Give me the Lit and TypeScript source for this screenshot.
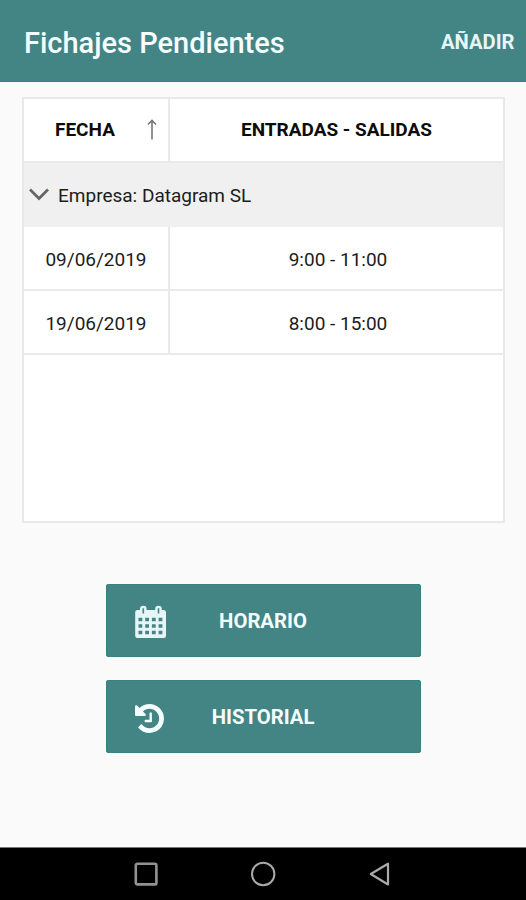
import { LitElement, html, css, svg } from "lit";
import { customElement, property } from "lit/decorators.js";

const calendarIcon = svg`<svg width="32" height="34" viewBox="0 0 32 34">
  <path fill="#e6f6f7" fill-rule="evenodd" d="M3 5H5V4a3.3 3.3 0 0 1 6.6 0V5H20.2V4a3.3 3.3 0 0 1 6.6 0V5H29A2.2 2.2 0 0 1 31 7.2V30.8A2.2 2.2 0 0 1 28.8 33H2.4A2.2 2.2 0 0 1 .2 30.8V7.2A2.2 2.2 0 0 1 2.4 5Z
  M7.5 3.2V8.4H9.1V3.2ZM22.7 3.2V8.4H24.3V3.2Z
  M3.5 12.7h3.8v3.5h-3.8zM10.2 12.7h3.8v3.5h-3.8zM16.9 12.7h3.8v3.5h-3.8zM23.6 12.7h3.8v3.5h-3.8z
  M3.5 19.2h3.8v3.5h-3.8zM10.2 19.2h3.8v3.5h-3.8zM16.9 19.2h3.8v3.5h-3.8zM23.6 19.2h3.8v3.5h-3.8z
  M3.5 25.7h3.8v3.5h-3.8zM10.2 25.7h3.8v3.5h-3.8zM16.9 25.7h3.8v3.5h-3.8zM23.6 25.7h3.8v3.5h-3.8z"/>
</svg>`;

const historyIcon = svg`<svg width="29" height="29" viewBox="0 128 1536 1536">
  <path fill="#f4fdfd" d="M1536 896q0 156-61 298t-164 245-245 164-298 61q-172 0-327-72.5t-264-204.5q-7-10-6.5-22.5t8.5-20.5l137-138q10-9 25-9 16 2 23 12 73 95 179 147t225 52q104 0 198.5-40.5t163.5-109.5 109.5-163.5 40.5-198.5-40.5-198.5-109.5-163.5-163.5-109.5-198.5-40.5q-98 0-188 35.5t-160 101.5l137 138q31 30 14 69-17 40-59 40h-448q-26 0-45-19t-19-45v-448q0-42 40-59 39-17 69 14l130 129q107-101 244.5-156.5t284.5-55.5q156 0 298 61t245 164 164 245 61 298zm-640-288v448q0 14-9 23t-23 9h-320q-14 0-23-9t-9-23v-64q0-14 9-23t23-9h224v-352q0-14 9-23t23-9h64q14 0 23 9t9 23z"/>
</svg>`;

@customElement("action-button")
class ActionButton extends LitElement {
  @property() label = "";
  @property({ attribute: false }) icon: unknown = null;

  static styles = css`
    :host { display: block; }
    .button {
      box-sizing: border-box;
      width: 315px;
      height: 73px;
      display: flex;
      align-items: center;
      padding: 1px 0 0 28.5px;
      border: 0;
      border-radius: 3px;
      background: #438485;
      color: #f4fdfd;
      font: 700 20.3px/24px Roboto, sans-serif;
      box-shadow: inset 0 0 0 1px #3a8080;
    }
    .icon { width: 34px; display: flex; flex: none; padding-top: 2px; }
    .label { width: 189px; text-align: center; }
  `;

  render() {
    return html`<button class="button">
      <span class="icon">${this.icon}</span><span class="label">${this.label}</span>
    </button>`;
  }
}

@customElement("app-root")
class AppRoot extends LitElement {
  rows = [
    { date: "09/06/2019", hours: "9:00 - 11:00" },
    { date: "19/06/2019", hours: "8:00 - 15:00" },
  ];

  static styles = css`
    :host {
      display: flex;
      flex-direction: column;
      height: 900px;
      background: #fafafa;
      font-family: Roboto, sans-serif;
      color: #1c1c1c;
      overflow: hidden;
      white-space: nowrap;
    }
    .bar {
      box-sizing: border-box;
      height: 82px;
      flex: none;
      padding: 3px 11.5px 0 24px;
      display: flex;
      align-items: center;
      justify-content: space-between;
      background: #438485;
      color: #f6fdfd;
      border-bottom: 1px solid #3a7e7e;
    }
    .title { font-size: 29px; font-weight: 500; padding-top: 2px; }
    .add { font-size: 20.2px; font-weight: 700; color: #e6f6f7; }
    .table {
      box-sizing: border-box;
      width: 483px;
      height: 426px;
      flex: none;
      margin: 15px 0 0 22px;
      background: #fff;
      border: 2px solid #e9e9e9;
      font-size: 19px;
    }
    .row {
      box-sizing: border-box;
      height: 64px;
      display: grid;
      grid-template-columns: 146px 1fr;
      border-bottom: 2px solid #e9e9e9;
    }
    .cell { display: flex; align-items: center; justify-content: center; padding-top: 3px; }
    .hours { padding-left: 3px; }
    .first { border-right: 2px solid #e9e9e9; }
    .head { color: #0c0c0c; font-weight: 700; }
    .head .cell { padding-top: 0; padding-bottom: 2px; }
    .head .first { justify-content: space-between; padding-left: 31px; padding-right: 11px; }
    .group {
      height: 64px;
      display: flex;
      align-items: center;
      gap: 9px;
      padding-left: 5px;
      background: #f0f0f0;
    }
    .actions {
      flex: 1;
      display: flex;
      flex-direction: column;
      gap: 23px;
      padding: 61px 0 0 106px;
    }
    .nav {
      box-sizing: border-box;
      height: 53px;
      flex: none;
      display: flex;
      justify-content: center;
      gap: 91px;
      align-items: center;
      background: #000;
      border-top: 1px solid #777;
    }
    svg { display: block; flex: none; }
  `;

  render() {
    return html`
      <header class="bar">
        <span class="title">Fichajes Pendientes</span>
        <span class="add">AÑADIR</span>
      </header>
      <section class="table">
        <div class="row head">
          <div class="cell first">
            <span>FECHA</span>
            <svg width="10" height="22" viewBox="0 0 10 22" fill="none" stroke="#777" stroke-width="1.6">
              <path d="M5 21.5V3M1 6.5L5 2.5L9 6.5" />
            </svg>
          </div>
          <div class="cell">ENTRADAS - SALIDAS</div>
        </div>
        <div class="group">
          <svg width="20" height="14" viewBox="0 0 20 14" fill="none" stroke="#666" stroke-width="2.7">
            <path d="M1 1.5L10 10.5L19 1.5" />
          </svg>
          <span>Empresa: Datagram SL</span>
        </div>
        ${this.rows.map((r) => html`<div class="row">
          <div class="cell first">${r.date}</div>
          <div class="cell hours">${r.hours}</div>
        </div>`)}
      </section>
      <main class="actions">
        <action-button label="HORARIO" .icon=${calendarIcon}></action-button>
        <action-button label="HISTORIAL" .icon=${historyIcon}></action-button>
      </main>
      <footer class="nav">
        <svg width="26" height="26" viewBox="0 0 26 26" fill="none" stroke="#929292" stroke-width="2.6">
          <rect x="2.8" y="2.8" width="20.6" height="20.6" rx="1.5" />
        </svg>
        <svg width="26" height="26" viewBox="0 0 26 26" fill="none" stroke="#aaa" stroke-width="2">
          <circle cx="13.2" cy="13" r="11.2" />
        </svg>
        <svg width="26" height="26" viewBox="0 0 26 26" fill="none" stroke="#aaa" stroke-width="2.2" stroke-linejoin="round">
          <path d="M3.8 13L21 2.7V23.5Z" />
        </svg>
      </footer>
    `;
  }
}
